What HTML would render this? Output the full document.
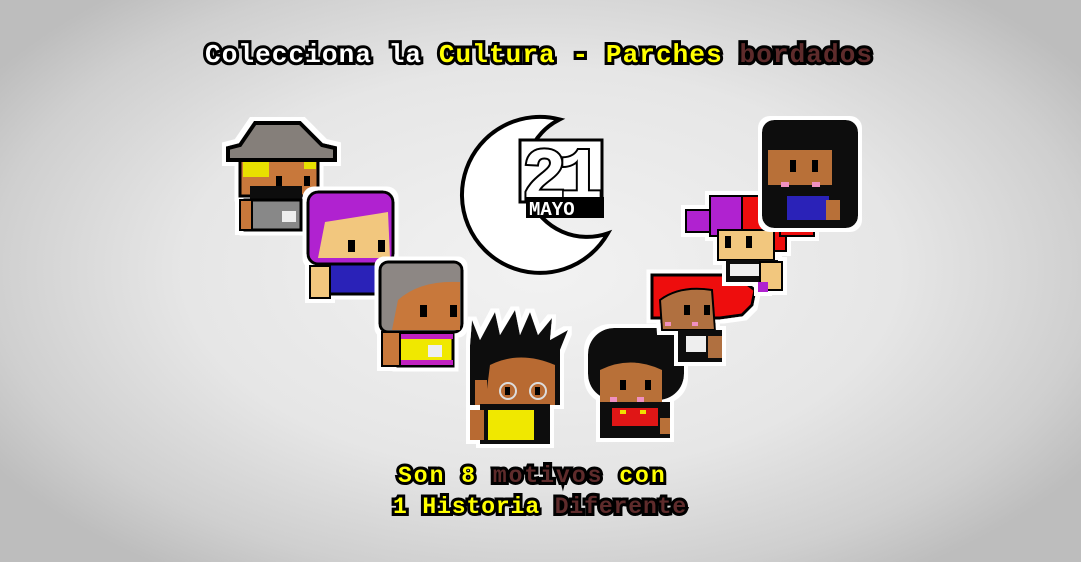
<!DOCTYPE html>
<html><head><meta charset="utf-8"><style>
html,body{margin:0;padding:0}
body{width:1081px;height:562px;overflow:hidden;position:relative;
background:radial-gradient(ellipse 60% 65% at 50% 48%,#f2f2f2 0%,#e6e6e6 55%,#cfcfcf 85%,#bdbdbd 100%);
font-family:"Liberation Mono",monospace;font-weight:bold}
.t{position:absolute;white-space:nowrap;-webkit-text-stroke:6px #000;paint-order:stroke fill;line-height:1}
.w{color:#fff}.y{color:#ffff00}.b{color:#5e2b2b}
svg{position:absolute;left:0;top:0}
</style></head><body>
<svg width="1081" height="562" viewBox="0 0 1081 562">
<defs>
<filter id="o" x="-20%" y="-20%" width="140%" height="140%">
<feMorphology in="SourceAlpha" operator="dilate" radius="4" result="d"/>
<feFlood flood-color="#fff"/><feComposite in2="d" operator="in" result="w"/>
<feMerge><feMergeNode in="w"/><feMergeNode in="SourceGraphic"/></feMerge>
</filter>
</defs>
<!-- moon -->
<g>
<path d="M559.6,119.4 A78 78 0 1 0 607.8,233.4 A62 62 0 0 1 559.6,119.4 Z" fill="#fff" stroke="#000" stroke-width="4" stroke-linejoin="miter"/>
<rect x="520" y="140" width="82" height="62" fill="#fff" stroke="#000" stroke-width="3"/>
<text x="522" y="199" font-family="Liberation Mono" font-weight="bold" font-size="74" fill="#fff" stroke="#000" stroke-width="4" paint-order="stroke fill" letter-spacing="-8">21</text>
<rect x="526" y="197" width="78" height="21" fill="#000"/>
<text x="529" y="215" font-family="Liberation Mono" font-weight="bold" font-size="19" fill="#fff">MAYO</text>
</g>
<!-- C1 hat -->
<g filter="url(#o)">
<rect x="240" y="160" width="78" height="36" fill="#c8783a" stroke="#000" stroke-width="3"/>
<rect x="243" y="162" width="26" height="15" fill="#e8e000"/><rect x="304" y="162" width="12" height="7" fill="#e8e000"/>
<rect x="276" y="176" width="6" height="10" fill="#000"/><rect x="304" y="176" width="6" height="10" fill="#000"/>
<rect x="250" y="186" width="52" height="18" fill="#111"/>
<rect x="245" y="200" width="56" height="30" fill="#888" stroke="#000" stroke-width="3"/>
<rect x="282" y="211" width="14" height="11" fill="#eee"/>
<rect x="240" y="200" width="12" height="30" fill="#c8783a" stroke="#000" stroke-width="2"/>
<polygon points="255,123 300,123 322,145 335,148 335,160 228,160 228,148 240,145" fill="#857f7a" stroke="#000" stroke-width="4"/>
</g>
<!-- C2 purple -->
<g filter="url(#o)">
<rect x="308" y="192" width="85" height="72" rx="10" fill="#b020d0" stroke="#000" stroke-width="3"/>
<path d="M325 222 L388 212 L390 258 L318 258 Z" fill="#f2c77e"/>
<rect x="348" y="240" width="7" height="12" fill="#000"/><rect x="378" y="240" width="7" height="12" fill="#000"/>
<rect x="328" y="264" width="48" height="30" fill="#2a20b8" stroke="#000" stroke-width="3"/>
<rect x="310" y="266" width="20" height="32" fill="#f2c77e" stroke="#000" stroke-width="2"/>
</g>
<!-- C3 gray -->
<g filter="url(#o)">
<rect x="380" y="262" width="82" height="70" rx="8" fill="#8d8784" stroke="#000" stroke-width="3"/>
<path d="M398 300 Q420 280 460 282 L460 330 L392 330 Z" fill="#c8783a"/>
<rect x="420" y="305" width="7" height="12" fill="#000"/><rect x="450" y="305" width="7" height="12" fill="#000"/>
<rect x="398" y="334" width="55" height="32" fill="#f0e800" stroke="#000" stroke-width="3"/>
<rect x="398" y="334" width="55" height="5" fill="#c020c0"/><rect x="398" y="360" width="55" height="5" fill="#c020c0"/>
<rect x="428" y="345" width="14" height="12" fill="#eee"/>
<rect x="382" y="332" width="18" height="34" fill="#c8783a" stroke="#000" stroke-width="2"/>
</g>
<!-- C4 spiky -->
<g filter="url(#o)">
<path d="M470 345 L472 320 L480 340 L495 312 L500 335 L515 310 L520 335 L530 312 L538 335 L552 318 L550 340 L568 330 L560 350 L560 405 L470 405 Z" fill="#111"/>
<path d="M490 365 Q520 350 555 365 L555 405 L485 405 Z" fill="#b86a30"/>
<rect x="475" y="380" width="12" height="25" fill="#b86a30"/>
<circle cx="508" cy="391" r="8" fill="none" stroke="#ddd" stroke-width="2"/><circle cx="538" cy="391" r="8" fill="none" stroke="#ddd" stroke-width="2"/>
<rect x="505" y="387" width="5" height="8" fill="#000"/><rect x="535" y="387" width="5" height="8" fill="#000"/>
<rect x="480" y="404" width="70" height="40" fill="#111"/>
<rect x="488" y="410" width="46" height="30" fill="#f0e800"/>
<rect x="470" y="410" width="14" height="30" fill="#b86a30"/>
</g>
<!-- C5 afro -->
<g filter="url(#o)">
<rect x="588" y="328" width="96" height="72" rx="26" fill="#111"/>
<path d="M600 370 Q630 355 662 370 L662 402 L600 402 Z" fill="#b87038"/>
<rect x="620" y="380" width="6" height="10" fill="#000"/><rect x="645" y="380" width="6" height="10" fill="#000"/>
<rect x="610" y="397" width="7" height="5" fill="#f090c0"/><rect x="637" y="397" width="7" height="5" fill="#f090c0"/>
<rect x="600" y="402" width="70" height="36" fill="#111"/>
<rect x="612" y="408" width="46" height="18" fill="#e01818"/>
<rect x="620" y="410" width="6" height="4" fill="#f0e000"/><rect x="640" y="410" width="6" height="4" fill="#f0e000"/>
<rect x="660" y="418" width="10" height="16" fill="#b87038"/>
</g>
<!-- C6 red -->
<g filter="url(#o)">
<path d="M652 275 L735 275 L755 290 L752 305 L742 315 L720 318 L652 318 Z" fill="#ee1010" stroke="#000" stroke-width="3"/>
<path d="M660 300 Q680 285 712 290 L715 330 L662 330 Z" fill="#b07040" stroke="#000" stroke-width="2"/>
<rect x="684" y="305" width="6" height="10" fill="#000"/><rect x="704" y="305" width="6" height="10" fill="#000"/>
<rect x="665" y="322" width="6" height="4" fill="#f090c0"/><rect x="692" y="322" width="6" height="4" fill="#f090c0"/>
<rect x="678" y="330" width="44" height="32" fill="#111"/>
<rect x="686" y="336" width="20" height="16" fill="#eee"/>
<rect x="708" y="336" width="14" height="22" fill="#b07040"/>
</g>
<!-- C7 purple/red -->
<g filter="url(#o)">
<rect x="686" y="210" width="32" height="22" fill="#b020d0" stroke="#000" stroke-width="2"/>
<rect x="710" y="196" width="36" height="40" fill="#b020d0" stroke="#000" stroke-width="2"/>
<rect x="742" y="196" width="44" height="55" fill="#ee1010" stroke="#000" stroke-width="2"/>
<rect x="780" y="212" width="34" height="24" fill="#ee1010" stroke="#000" stroke-width="2"/>
<rect x="718" y="230" width="56" height="30" fill="#f2c77e" stroke="#000" stroke-width="2"/>
<rect x="746" y="236" width="6" height="12" fill="#000"/><rect x="725" y="236" width="6" height="12" fill="#000"/>
<rect x="726" y="260" width="52" height="22" fill="#111"/>
<rect x="730" y="264" width="44" height="12" fill="#eee"/>
<rect x="760" y="262" width="22" height="28" fill="#f2c77e" stroke="#000" stroke-width="2"/>
<rect x="758" y="282" width="10" height="10" fill="#b020d0"/>
</g>
<!-- C8 black -->
<g filter="url(#o)">
<rect x="762" y="120" width="96" height="108" rx="12" fill="#111"/>
<rect x="768" y="150" width="64" height="35" fill="#b87038"/>
<rect x="790" y="160" width="6" height="12" fill="#000"/><rect x="812" y="160" width="6" height="12" fill="#000"/>
<rect x="781" y="182" width="8" height="5" fill="#f090c0"/><rect x="812" y="182" width="8" height="5" fill="#f090c0"/>
<rect x="787" y="196" width="42" height="24" fill="#2a20b8"/>
<rect x="826" y="200" width="14" height="20" fill="#b87038"/>
</g>
</svg>
<div class="t" style="left:205px;top:42px;font-size:26px;letter-spacing:1.1px"><span class="w">Colecciona la </span><span class="y">Cultura - Parches </span><span class="b">bordados</span></div>
<div class="t" style="left:398px;top:465px;font-size:23px;letter-spacing:2px"><span class="y">Son 8 </span><span class="b">motivos </span><span class="y">con</span></div>
<div class="t" style="left:393px;top:496px;font-size:23px;letter-spacing:0.9px"><span class="y">1 Historia </span><span class="b">Diferente</span></div>
</body></html>
